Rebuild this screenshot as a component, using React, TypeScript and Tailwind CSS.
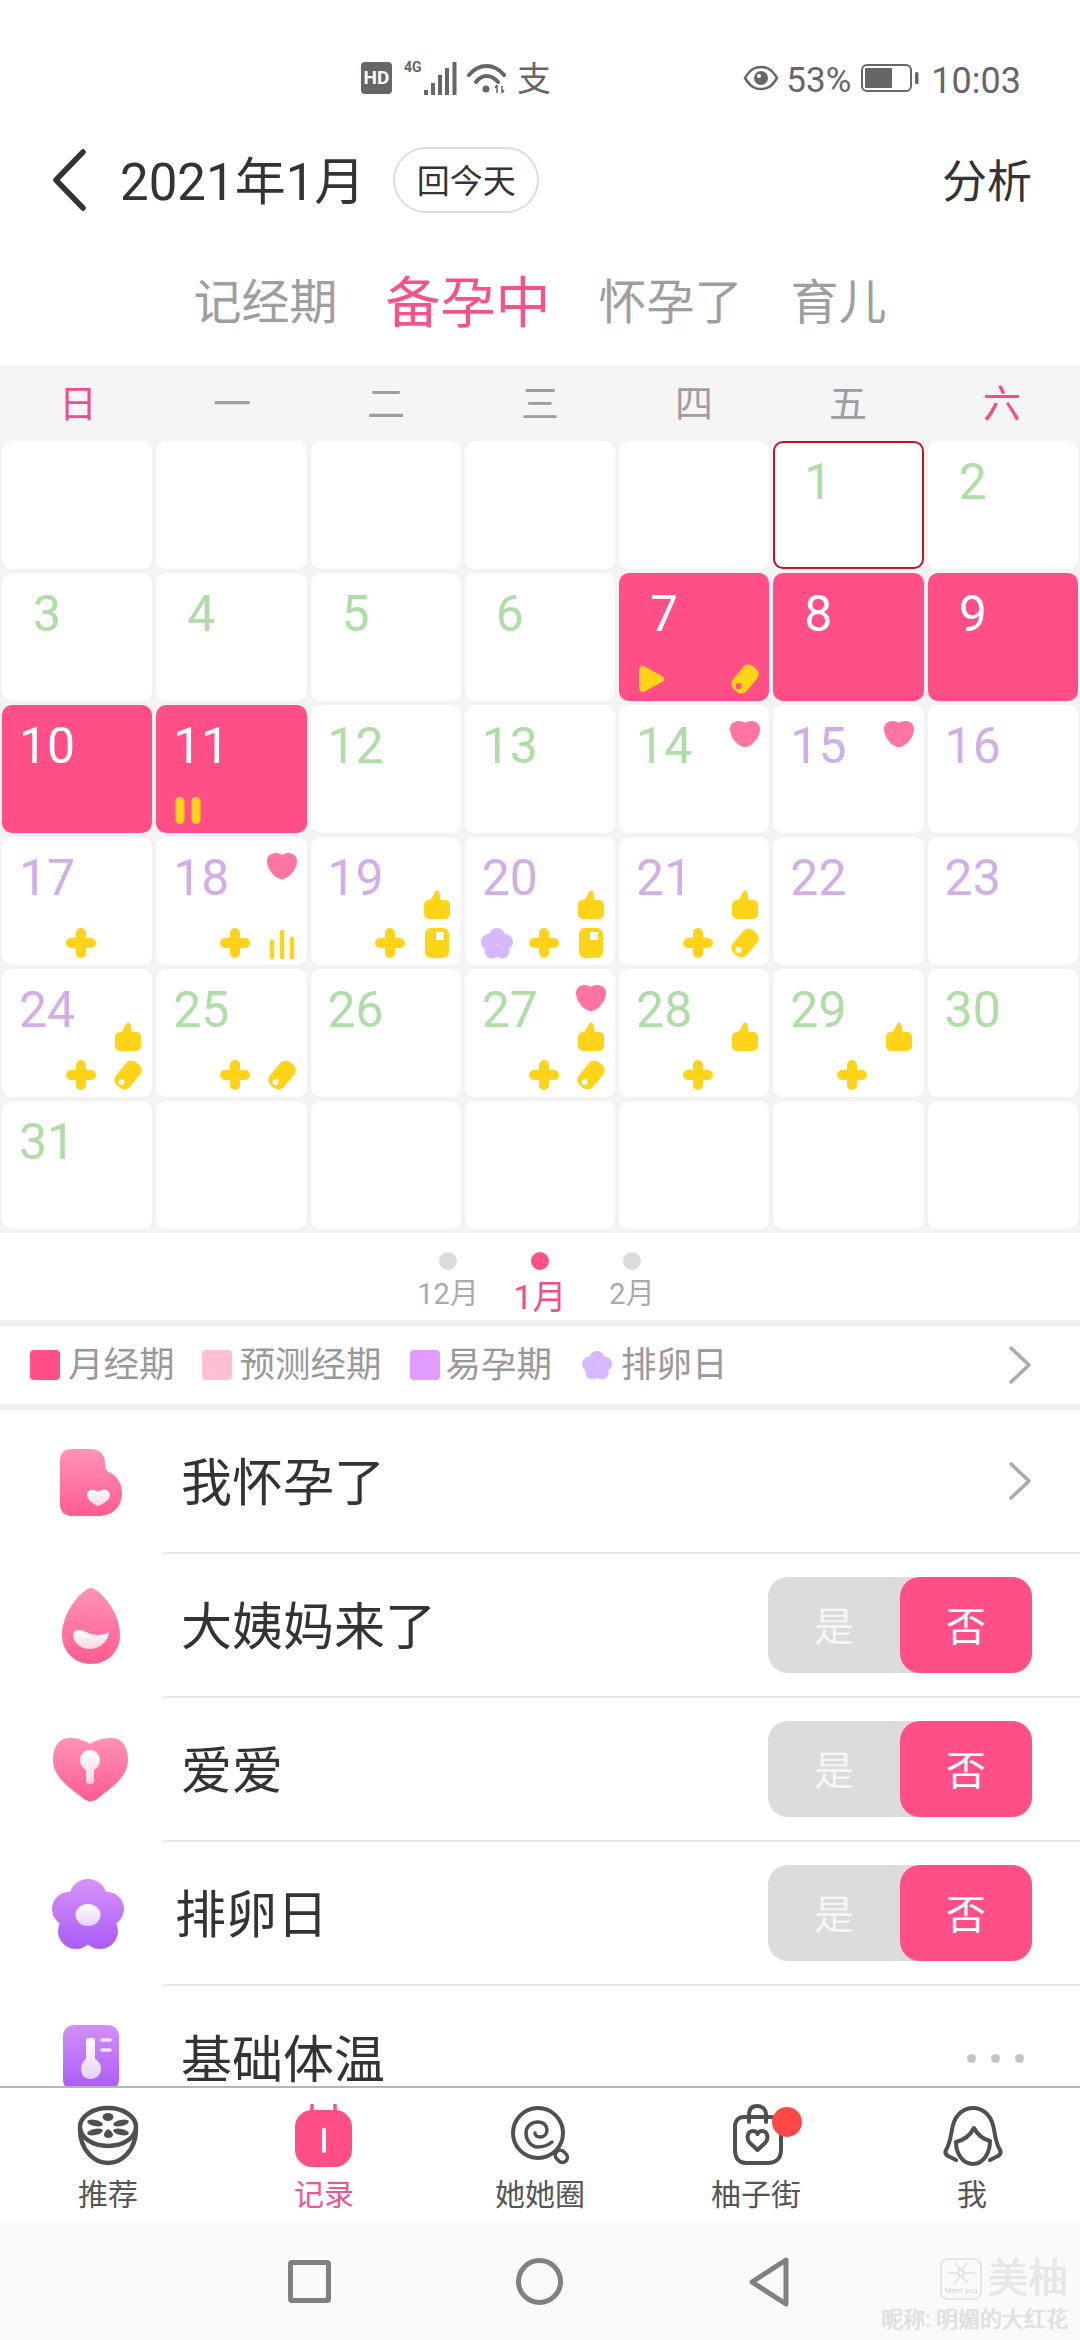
import type { ReactNode } from "react";

type Mark = "plus" | "thumb" | "tag" | "doc" | "heart" | "bars" | "flower" | "play" | "pause";
type Slot = "topC" | "midC" | "botA" | "botB" | "botC";
type Day = { n?: number; tone?: "green" | "purple" | "period"; today?: boolean; marks?: [Mark, Slot][] };

const slotClass: Record<Slot, string> = {
  topC: "left-[110px] top-[13px]",
  midC: "left-[110px] top-[52px]",
  botA: "left-[16px] top-[90px]",
  botB: "left-[63px] top-[90px]",
  botC: "left-[110px] top-[90px]",
};

const toneClass = {
  green: "text-[#b0dca8]",
  purple: "text-[#d2aee6]",
  period: "text-white",
};

const days: Day[] = [
  {}, {}, {}, {}, {},
  { n: 1, tone: "green", today: true },
  { n: 2, tone: "green" },
  { n: 3, tone: "green" },
  { n: 4, tone: "green" },
  { n: 5, tone: "green" },
  { n: 6, tone: "green" },
  { n: 7, tone: "period", marks: [["play", "botA"], ["tag", "botC"]] },
  { n: 8, tone: "period" },
  { n: 9, tone: "period" },
  { n: 10, tone: "period" },
  { n: 11, tone: "period", marks: [["pause", "botA"]] },
  { n: 12, tone: "green" },
  { n: 13, tone: "green" },
  { n: 14, tone: "green", marks: [["heart", "topC"]] },
  { n: 15, tone: "purple", marks: [["heart", "topC"]] },
  { n: 16, tone: "purple" },
  { n: 17, tone: "purple", marks: [["plus", "botB"]] },
  { n: 18, tone: "purple", marks: [["heart", "topC"], ["plus", "botB"], ["bars", "botC"]] },
  { n: 19, tone: "purple", marks: [["thumb", "midC"], ["plus", "botB"], ["doc", "botC"]] },
  { n: 20, tone: "purple", marks: [["thumb", "midC"], ["flower", "botA"], ["plus", "botB"], ["doc", "botC"]] },
  { n: 21, tone: "purple", marks: [["thumb", "midC"], ["plus", "botB"], ["tag", "botC"]] },
  { n: 22, tone: "purple" },
  { n: 23, tone: "purple" },
  { n: 24, tone: "purple", marks: [["thumb", "midC"], ["plus", "botB"], ["tag", "botC"]] },
  { n: 25, tone: "green", marks: [["plus", "botB"], ["tag", "botC"]] },
  { n: 26, tone: "green" },
  { n: 27, tone: "green", marks: [["heart", "topC"], ["thumb", "midC"], ["plus", "botB"], ["tag", "botC"]] },
  { n: 28, tone: "green", marks: [["thumb", "midC"], ["plus", "botB"]] },
  { n: 29, tone: "green", marks: [["thumb", "midC"], ["plus", "botB"]] },
  { n: 30, tone: "green" },
  { n: 31, tone: "green" },
  {}, {}, {}, {}, {}, {},
];

const YELLOW = "#ffd317";

function FlowerShape({ fill }: { fill: string }) {
  return (
    <g fill={fill}>
      <circle cx="16" cy="9" r="8" />
      <circle cx="8" cy="15" r="8" />
      <circle cx="24" cy="15" r="8" />
      <circle cx="11" cy="24" r="7.5" />
      <circle cx="21" cy="24" r="7.5" />
    </g>
  );
}

function MarkIcon({ kind, onPeriod }: { kind: Mark; onPeriod?: boolean }) {
  const hole = onPeriod ? "#ff4f86" : "#ffffff";
  return (
    <svg viewBox="0 0 32 32" className="w-8 h-8 block">
      {kind === "plus" && (
        <path d="M16 6V26M6 16H26" stroke={YELLOW} strokeWidth="10" strokeLinecap="round" />
      )}
      {kind === "thumb" && (
        <g fill={YELLOW}>
          <rect x="3" y="11" width="26" height="19" rx="5" />
          <path d="M8 14L14 3C15 1 18 1 18.5 4L20 14Z" />
        </g>
      )}
      {kind === "tag" && (
        <>
          <rect x="7" y="1" width="18" height="30" rx="7" transform="rotate(40 16 16)" fill={YELLOW} />
          <circle cx="9.5" cy="23" r="3" fill={hole} />
        </>
      )}
      {kind === "doc" && (
        <>
          <rect x="4" y="1" width="24" height="30" rx="6" fill={YELLOW} />
          <rect x="15" y="5" width="8" height="8" fill="#ffffff" />
        </>
      )}
      {kind === "heart" && (
        <path
          d="M16 29C9 29 1 19 1 11C1 5 6 3 10 3C12 3 15 4 16 5C17 4 20 3 22 3C26 3 31 5 31 11C31 19 23 29 16 29Z"
          fill="#ff74a2"
        />
      )}
      {kind === "bars" && (
        <path d="M6 30V15M16 30V5M26 30V12" stroke={YELLOW} strokeWidth="4.5" strokeLinecap="round" />
      )}
      {kind === "flower" && <FlowerShape fill="#d6b8ff" />}
      {kind === "play" && (
        <path d="M9 3C6 2 4 5 4 8V24C4 27 6 30 9 29L27 19C30 17 30 15 27 13Z" fill={YELLOW} />
      )}
      {kind === "pause" && (
        <g fill={YELLOW}>
          <rect x="3.5" y="2" width="9" height="27" rx="4.5" />
          <rect x="19.5" y="2" width="9" height="27" rx="4.5" />
        </g>
      )}
    </svg>
  );
}

function DayCell({ day }: { day: Day }) {
  const period = day.tone === "period";
  return (
    <div
      className={`relative h-[128px] rounded-[10px] ${period ? "bg-[#ff4f86]" : "bg-white"} ${
        day.today ? "border-2 border-[#c0141f]" : ""
      }`}
    >
      {day.n !== undefined && (
        <div
          className={`w-[90px] text-center text-[50px] leading-[52px] ${
            day.today ? "mt-[13px] -ml-[2px]" : "mt-[15px]"
          } ${toneClass[day.tone ?? "green"]}`}
        >
          {day.n}
        </div>
      )}
      {day.marks?.map(([kind, slot]) => (
        <div key={kind + slot} className={`absolute ${slotClass[slot]}`}>
          <MarkIcon kind={kind} onPeriod={period} />
        </div>
      ))}
    </div>
  );
}

function ChevronRight() {
  return (
    <svg viewBox="0 0 24 40" className="w-6 h-10">
      <path
        d="M3 3L21 20L3 37"
        fill="none"
        stroke="#aaaaaa"
        strokeWidth="3.5"
        strokeLinecap="round"
        strokeLinejoin="round"
      />
    </svg>
  );
}

function Toggle() {
  return (
    <div className="flex w-[264px] h-[96px] rounded-[20px] bg-[#dcdcdc] text-[40px] text-white">
      <div className="flex-1 flex items-center justify-center pt-[6px] text-[#f5f5f5]">是</div>
      <div className="flex-1 flex items-center justify-center pt-[6px] rounded-[20px] bg-[#ff4f86]">否</div>
    </div>
  );
}

function ListRow({
  icon,
  label,
  right,
  textClass = "",
  last,
}: {
  icon: ReactNode;
  label: string;
  right: ReactNode;
  textClass?: string;
  last?: boolean;
}) {
  return (
    <div className="flex h-[144px] shrink-0">
      <div className="w-[163px] shrink-0 pl-[18px] flex items-center justify-center">{icon}</div>
      <div
        className={`flex-1 flex items-center justify-between pl-[18px] pr-[48px] ${
          last ? "" : "border-b-2 border-[#e8e8e8]"
        }`}
      >
        <span className={`mt-[7px] text-[51px] text-[#333333] ${textClass}`}>{label}</span>
        {right}
      </div>
    </div>
  );
}

function PregnantIcon() {
  return (
    <svg viewBox="0 0 62 67" className="w-[62px] h-[67px]">
      <defs>
        <linearGradient id="pinkA" x1="0" y1="0" x2="0" y2="1">
          <stop offset="0" stopColor="#ff92b8" />
          <stop offset="1" stopColor="#ff5c91" />
        </linearGradient>
        <linearGradient id="whiteA" x1="0" y1="0" x2="0" y2="1">
          <stop offset="0" stopColor="#ffffff" />
          <stop offset="1" stopColor="#fbd3e2" />
        </linearGradient>
      </defs>
      <path
        d="M12 0H30C40 0 45 6 45 14C45 19 46 21 49 23C57 27 62 34 62 44C62 58 52 67 38 67H12C4 67 0 62 0 55V12C0 4 4 0 12 0Z"
        fill="url(#pinkA)"
      />
      <path
        d="M38 57C33 55 27 51 27 46C27 42 31 40 34 41C36 41.5 37 42 38 43C39 42 41 41 43 41C46 40 50 42 50 46C50 51 43 55 38 57Z"
        fill="url(#whiteA)"
      />
    </svg>
  );
}

function DropIcon() {
  return (
    <svg viewBox="0 0 58 76" className="w-[58px] h-[76px]">
      <defs>
        <linearGradient id="pinkB" x1="0" y1="0" x2="0" y2="1">
          <stop offset="0" stopColor="#ff92b8" />
          <stop offset="1" stopColor="#ff5c91" />
        </linearGradient>
        <linearGradient id="whiteB" x1="0" y1="0" x2="0" y2="1">
          <stop offset="0" stopColor="#ffffff" />
          <stop offset="1" stopColor="#fbd3e2" />
        </linearGradient>
      </defs>
      <path
        d="M29 0C36 0 58 22 58 47C58 64 45 76 29 76C13 76 0 64 0 47C0 22 22 0 29 0Z"
        fill="url(#pinkB)"
      />
      <path
        d="M11 47C12 41 19 41 24 44C32 48 40 48 47 44C46 54 37 61 28 61C19 61 11 55 11 47Z"
        fill="url(#whiteB)"
      />
    </svg>
  );
}

function LoveIcon() {
  return (
    <svg viewBox="0 0 75 64" className="w-[75px] h-[64px]">
      <defs>
        <linearGradient id="pinkC" x1="0" y1="0" x2="0" y2="1">
          <stop offset="0" stopColor="#ff92b8" />
          <stop offset="1" stopColor="#ff5c91" />
        </linearGradient>
        <linearGradient id="whiteC" x1="0" y1="0" x2="0" y2="1">
          <stop offset="0" stopColor="#ffffff" />
          <stop offset="1" stopColor="#fbd3e2" />
        </linearGradient>
      </defs>
      <path
        d="M37 6C30 1 22 0 16 0C6 0 0 9 0 22C0 40 20 52 31 61C35 64 40 64 44 61C55 52 75 40 75 22C75 9 69 0 59 0C52 0 44 1 37 6Z"
        fill="url(#pinkC)"
      />
      <path
        d="M37 12C43 12 47 17 47 22C47 27 44 30 41 32V43C41 47 33 47 33 43V32C30 30 27 27 27 22C27 17 31 12 37 12Z"
        fill="url(#whiteC)"
      />
    </svg>
  );
}

function OvulationIcon() {
  return (
    <svg viewBox="0 0 72 70" className="w-[72px] h-[70px] -ml-[6px]">
      <defs>
        <linearGradient id="purpleA" x1="0" y1="0" x2="0" y2="70" gradientUnits="userSpaceOnUse">
          <stop offset="0" stopColor="#d992f9" />
          <stop offset="1" stopColor="#a95bf5" />
        </linearGradient>
        <linearGradient id="whiteD" x1="0" y1="0" x2="0" y2="1">
          <stop offset="0" stopColor="#ffffff" />
          <stop offset="1" stopColor="#e7d3f8" />
        </linearGradient>
      </defs>
      <g fill="url(#purpleA)">
        <circle cx="36" cy="19" r="19" />
        <circle cx="17" cy="30" r="17" />
        <circle cx="55" cy="30" r="17" />
        <circle cx="24" cy="52" r="18" />
        <circle cx="48" cy="52" r="18" />
        <circle cx="36" cy="36" r="20" />
      </g>
      <ellipse cx="36" cy="36" rx="12.5" ry="11" fill="url(#whiteD)" />
    </svg>
  );
}

function TempIcon() {
  return (
    <svg viewBox="0 0 56 66" className="w-[56px] h-[66px]">
      <defs>
        <linearGradient id="purpleB" x1="0" y1="0" x2="0" y2="1">
          <stop offset="0" stopColor="#d28ffa" />
          <stop offset="1" stopColor="#a95bf5" />
        </linearGradient>
        <linearGradient id="whiteE" x1="0" y1="0" x2="0" y2="1">
          <stop offset="0" stopColor="#ffffff" />
          <stop offset="1" stopColor="#e3d2f7" />
        </linearGradient>
      </defs>
      <rect width="56" height="66" rx="11" fill="url(#purpleB)" />
      <path
        d="M23 15C23 12 32 12 32 15V34C36 36 38 40 38 44C38 50 33 54 27.5 54C22 54 18 50 18 44C18 40 20 36 23 34Z"
        fill="url(#whiteE)"
      />
      <path d="M39 15H47M39 25H47" stroke="#f1e2fd" strokeWidth="3.5" strokeLinecap="round" />
    </svg>
  );
}

function NavFruit() {
  return (
    <svg viewBox="0 0 64 64" className="w-16 h-16">
      <ellipse cx="32" cy="23" rx="28" ry="19" fill="none" stroke="#505050" strokeWidth="4.5" />
      <path
        d="M4 25C4 47 19 59 32 59C45 59 60 47 60 25"
        fill="none"
        stroke="#505050"
        strokeWidth="4.5"
      />
      <g fill="#505050">
        <ellipse cx="32" cy="13" rx="5.5" ry="4" />
        <path d="M28 31C28 28 31 26 32 25C34 26 37 28 37 31C37 35 28 35 28 31Z" />
        <ellipse cx="19" cy="19" rx="8" ry="3" transform="rotate(12 19 19)" />
        <ellipse cx="19" cy="28" rx="8" ry="3" transform="rotate(-12 19 28)" />
        <ellipse cx="45" cy="19" rx="8" ry="3" transform="rotate(-12 45 19)" />
        <ellipse cx="45" cy="28" rx="8" ry="3" transform="rotate(12 45 28)" />
      </g>
    </svg>
  );
}

function NavRecord() {
  return (
    <svg viewBox="0 0 64 64" className="w-16 h-16">
      <path d="M20 1V8M43 1V8" stroke="#ff4f86" strokeWidth="3.5" strokeLinecap="round" />
      <rect x="3" y="6" width="57" height="57" rx="17" fill="#ff4f86" />
      <rect x="30" y="24" width="4" height="25" rx="2" fill="#ffffff" />
    </svg>
  );
}

function NavCircle() {
  return (
    <svg viewBox="0 0 64 64" className="w-16 h-16">
      <rect
        x="47"
        y="47"
        width="13"
        height="10"
        rx="5"
        transform="rotate(45 53 52)"
        fill="#ffffff"
        stroke="#505050"
        strokeWidth="3.5"
      />
      <circle cx="30" cy="29" r="25" fill="#ffffff" stroke="#505050" strokeWidth="4" />
      <path
        d="M44 38C39 42 35 43 30 43C23 43 18 36 18 29C18 22 24 18 30 18C36 18 39 22 39 26C39 30 36 33 32 33C29 33 27 31 27 29"
        fill="none"
        stroke="#505050"
        strokeWidth="3.5"
        strokeLinecap="round"
      />
    </svg>
  );
}

function NavBag() {
  return (
    <svg viewBox="0 0 64 64" className="w-16 h-16">
      <g fill="none" stroke="#505050" strokeWidth="4" strokeLinecap="round" strokeLinejoin="round">
        <path d="M20 13H46C53 13 57 17 57 23V46C57 54 52 59 45 59H22C15 59 11 54 11 46V23C11 17 14 13 20 13Z" />
        <path d="M25 18V11C25 5 28 2 33 2C38 2 42 5 42 11V18" />
        <path d="M33.5 46L26 39C22 35 23 27 29 27C31 27 33 28 33.5 30C34.5 28 36 27 38 27C44 27 45 35 41 39Z" />
      </g>
    </svg>
  );
}

function NavGirl() {
  return (
    <svg viewBox="0 0 64 64" className="w-16 h-16">
      <g fill="none" stroke="#505050" strokeWidth="4" strokeLinecap="round" strokeLinejoin="round">
        <path d="M16 56L8 52C5 50 5 48 6 46C11 38 11 28 13 21C16 10 24 4 33 4C42 4 50 10 53 21C55 28 55 38 60 46C61 48 61 50 58 52L50 56" />
        <path d="M16 38C24 36 30 32 34 24C37 30 43 35 50 37C50 48 44 60 33 60C23 60 16 50 16 38Z" />
      </g>
    </svg>
  );
}

function NavItem({
  icon,
  label,
  active,
  badge,
}: {
  icon: ReactNode;
  label: string;
  active?: boolean;
  badge?: boolean;
}) {
  return (
    <div className="flex flex-col items-center pt-[16px]">
      <div className="relative w-16 h-16">
        {icon}
        {badge && (
          <div className="absolute left-[48px] top-[3px] w-[30px] h-[30px] rounded-full bg-[#ff4747]" />
        )}
      </div>
      <div
        className={`mt-[7px] text-[30px] leading-[40px] ${active ? "text-[#ee5592]" : "text-[#555555]"}`}
      >
        {label}
      </div>
    </div>
  );
}

function LegendSquare({ color }: { color: string }) {
  return <div className={`w-[30px] h-[30px] rounded-[4px] ${color}`} />;
}

export default function App() {
  return (
    <div className="relative w-[1080px] h-[2340px] overflow-hidden flex flex-col bg-white font-[Roboto,'Noto_Sans_CJK_SC',sans-serif]">
      {/* Status bar */}
      <div className="mt-[60px] h-[36px] shrink-0 flex items-center justify-between pl-[361px] pr-[59px] text-[#666666]">
        <div className="flex items-center">
          <div className="w-[31px] h-[32px] rounded-[4px] bg-[#666666] text-white text-[19px] font-bold flex items-center justify-center">
            HD
          </div>
          <div className="ml-[12px] w-[19px] self-start text-[14px] leading-[16px] font-bold">4G</div>
          <svg viewBox="0 0 34 33" className="w-[34px] h-[33px]">
            <path d="M3 33V28M10 33V21M17 33V13M24 33V6M31.5 33V0" stroke="#666666" strokeWidth="4" />
          </svg>
          <svg viewBox="0 0 39 32" className="ml-[10px] w-[39px] h-[32px]">
            <g fill="none" stroke="#666666" strokeWidth="4" strokeLinecap="round">
              <path d="M2 13C12 1 27 1 37 13" />
              <path d="M9 20C15 12 24 12 31 20" />
            </g>
            <circle cx="19" cy="27" r="3.5" fill="#666666" />
            <path d="M30 23V31M35 24V31M28 26L30 23M35 31L37 28" stroke="#666666" strokeWidth="1.5" fill="none" />
          </svg>
          <div className="ml-[11px] mt-[2px] text-[34px] leading-[36px]">支</div>
        </div>
        <div className="flex items-center">
          <svg viewBox="0 0 36 26" className="w-[36px] h-[26px]">
            <path d="M2 13C8 3 13 2 18 2C23 2 28 3 34 13C28 23 23 24 18 24C13 24 8 23 2 13Z" fill="none" stroke="#666666" strokeWidth="2.5" />
            <circle cx="18" cy="13" r="7" fill="#666666" />
            <circle cx="16" cy="11" r="2" fill="#ffffff" />
          </svg>
          <span className="ml-[7px] mt-[6px] text-[35px] leading-[36px]">53%</span>
          <svg viewBox="0 0 58 28" className="ml-[10px] w-[58px] h-[28px]">
            <rect x="1" y="1" width="49" height="26" rx="5" fill="none" stroke="#666666" strokeWidth="2" />
            <rect x="4" y="4" width="27" height="20" rx="1" fill="#666666" />
            <rect x="54" y="8" width="3.5" height="12" rx="1.5" fill="#666666" />
          </svg>
          <span className="ml-[12px] mt-[6px] text-[36px] leading-[36px]">10:03</span>
        </div>
      </div>

      {/* Header */}
      <div className="mt-[51px] h-[66px] shrink-0 flex items-center pl-[52px] pr-[48px] text-[#333333]">
        <svg viewBox="0 0 34 62" className="w-[34px] h-[62px] shrink-0">
          <path d="M31 3L4 31L31 59" fill="none" stroke="#333333" strokeWidth="5.5" strokeLinecap="round" strokeLinejoin="round" />
        </svg>
        <span className="ml-[34px] mt-[6px] text-[51px] leading-[66px]">2021年1月</span>
        <div className="ml-[28px] w-[146px] h-[66px] pt-[4px] rounded-[33px] border-2 border-[#dddddd] flex items-center justify-center text-[33px]">
          回今天
        </div>
        <span className="ml-auto mt-[6px] text-[45px]">分析</span>
      </div>

      {/* Modes */}
      <div className="mt-[60px] h-[60px] shrink-0 flex items-center justify-center gap-[48px] text-[48px] text-[#9e9e9e]">
        <span>记经期</span>
        <span className="text-[55px] text-[#f5518a]">备孕中</span>
        <span>怀孕了</span>
        <span>育儿</span>
      </div>

      {/* Week header */}
      <div className="mt-[32px] h-[76px] pt-[3px] shrink-0 grid grid-cols-7 items-center px-[1px] bg-[#f5f5f5] text-center text-[38px] text-[#9e9e9e]">
        <span className="text-[#ee4f8a]">日</span>
        <span>一</span>
        <span>二</span>
        <span>三</span>
        <span>四</span>
        <span>五</span>
        <span className="text-[#ee4f8a]">六</span>
      </div>

      {/* Calendar */}
      <div className="shrink-0 grid grid-cols-7 gap-[4px] px-[2px] pb-[4px] bg-[#f3f3f3]">
        {days.map((day, i) => (
          <DayCell key={i} day={day} />
        ))}
      </div>

      {/* Month switch */}
      <div className="h-[87px] shrink-0 flex justify-center text-[#aaaaaa]">
        <div className="w-[92px] flex flex-col items-center">
          <div className="mt-[19px] w-[18px] h-[18px] rounded-full bg-[#dcdcdc]" />
          <div className="mt-[9px] text-[29px] leading-[30px]">12月</div>
        </div>
        <div className="w-[92px] flex flex-col items-center">
          <div className="mt-[19px] w-[18px] h-[18px] rounded-full bg-[#ff4f86]" />
          <div className="mt-[9px] text-[34px] leading-[36px] text-[#ee4f8a]">1月</div>
        </div>
        <div className="w-[92px] flex flex-col items-center">
          <div className="mt-[19px] w-[18px] h-[18px] rounded-full bg-[#dcdcdc]" />
          <div className="mt-[9px] text-[29px] leading-[30px]">2月</div>
        </div>
      </div>

      {/* Legend */}
      <div className="h-[90px] shrink-0 flex items-center pl-[30px] pr-[48px] border-y-[6px] border-[#f0f0f0] text-[35.5px] text-[#999999]">
        <LegendSquare color="bg-[#ff4f86]" />
        <span className="ml-[8px] mt-[2px]">月经期</span>
        <div className="ml-[27px]">
          <LegendSquare color="bg-[#ffc0d4]" />
        </div>
        <span className="ml-[8px] mt-[2px]">预测经期</span>
        <div className="ml-[28px]">
          <LegendSquare color="bg-[#e09dff]" />
        </div>
        <span className="ml-[6px] mt-[2px]">易孕期</span>
        <div className="ml-[30px]">
          <svg viewBox="0 0 32 32" className="w-[30px] h-[30px]">
            <FlowerShape fill="#d6b8ff" />
          </svg>
        </div>
        <span className="ml-[9px] mt-[2px]">排卵日</span>
        <div className="ml-auto">
          <ChevronRight />
        </div>
      </div>

      {/* Record list */}
      <div className="flex-1 min-h-0 overflow-hidden flex flex-col">
        <ListRow icon={<PregnantIcon />} label="我怀孕了" right={<ChevronRight />} />
        <ListRow icon={<DropIcon />} label="大姨妈来了" right={<Toggle />} />
        <ListRow icon={<LoveIcon />} label="爱爱" right={<Toggle />} />
        <ListRow icon={<OvulationIcon />} label="排卵日" right={<Toggle />} textClass="-ml-[6px]" />
        <ListRow
          icon={<TempIcon />}
          label="基础体温"
          last
          right={
            <div className="flex gap-[15px] pr-[8px]">
              <div className="w-[9px] h-[9px] rounded-full bg-[#c4c4c4]" />
              <div className="w-[9px] h-[9px] rounded-full bg-[#c4c4c4]" />
              <div className="w-[9px] h-[9px] rounded-full bg-[#c4c4c4]" />
            </div>
          }
        />
      </div>

      {/* Tab bar */}
      <div className="h-[137px] shrink-0 grid grid-cols-5 border-t-2 border-[#b5b5b5]">
        <NavItem icon={<NavFruit />} label="推荐" />
        <NavItem icon={<NavRecord />} label="记录" active />
        <NavItem icon={<NavCircle />} label="她她圈" />
        <NavItem icon={<NavBag />} label="柚子街" badge />
        <NavItem icon={<NavGirl />} label="我" />
      </div>

      {/* System nav */}
      <div className="h-[117px] shrink-0 flex items-center pl-[288px] bg-[#fafafa]">
        <div className="w-[43px] h-[43px] rounded-[4px] border-[5px] border-[#808080]" />
        <div className="ml-[185px] w-[47px] h-[47px] rounded-full border-[5px] border-[#808080]" />
        <svg viewBox="0 0 42 50" className="ml-[185px] w-[42px] h-[50px]">
          <path d="M38 3L4 25L38 47Z" fill="none" stroke="#808080" strokeWidth="5" strokeLinejoin="round" />
        </svg>
      </div>

      {/* Watermark */}
      <div className="absolute right-[12px] top-[2258px] flex flex-col items-end text-[#e8e8e8]">
        <div className="flex items-center">
          <div className="relative w-[42px] h-[42px] rounded-[8px] border-2 border-[#e6e6e6] flex flex-col items-center">
            <svg viewBox="0 0 32 24" className="w-[32px] h-[26px]">
              <circle cx="16" cy="12" r="3" fill="none" stroke="#e0e0e0" strokeWidth="2" />
              <path d="M16 9L10 2M16 9L22 2M13 12H2M19 12H30M16 15L9 22M16 15L23 22" stroke="#e6e6e6" strokeWidth="2" />
            </svg>
            <span className="text-[8px] leading-[10px] text-[#d8d8d8]">Meet you</span>
          </div>
          <span className="ml-[6px] text-[40px] leading-[42px] [text-shadow:0_0_1px_#d0d0d0]">美柚</span>
        </div>
        <div className="mt-[7px] text-[22px] leading-[26px] text-[#e4e4e4] [text-shadow:0_0_1px_#c0c0c0]">
          昵称: 明媚的大红花
        </div>
      </div>
    </div>
  );
}
